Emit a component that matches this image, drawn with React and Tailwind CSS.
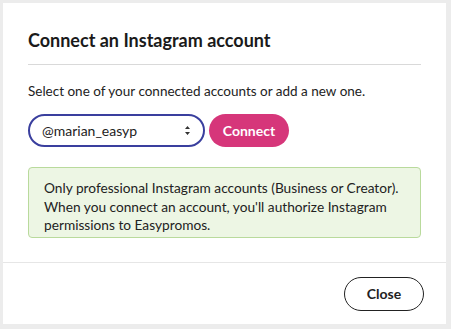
export default function App() {
  return (
    <div className="w-[451px] h-[329px] bg-[#ececec] pt-[3px] pl-[3px] pr-[5px] pb-[5px]" style={{ fontFamily: 'Lato, "Noto Sans", sans-serif' }}>
      <div className="bg-white h-full flex flex-col">
        <div className="px-[25px]">
          <div className="pt-[26px] pb-[13px] border-b border-[#d9d9d9]">
            <h3 className="text-[18px] leading-[22px] font-bold text-[#1a1a1a]">Connect an Instagram account</h3>
          </div>
          <p className="mt-[16px] text-[13.5px] leading-[20px] text-[#222]">Select one of your connected accounts or add a new one.</p>
          <div className="flex items-center gap-[4px] mt-[13px]">
            <div className="w-[177px] h-[33px] rounded-full border-2 border-[#3a3f9e] flex items-center justify-between pl-[12px] pr-[12px]">
              <span className="text-[14px] text-[#222]">@marian_easyp</span>
              <svg width="7" height="11" viewBox="0 0 7 11"><path d="M3.5 1 L6 4 H1 Z M3.5 10 L6 7 H1 Z" fill="#333" /></svg>
            </div>
            <button className="w-[80px] h-[33px] rounded-full bg-[#d6367a] text-white text-[14px] font-bold">Connect</button>
          </div>
          <div className="mt-[20px] border border-[#b9da9c] bg-[#edf6e4] rounded-[4px] px-[15px] pt-[11px] pb-[3px] text-[13.7px] leading-[18px] text-[#222]">
            <p>Only professional Instagram accounts (Business or Creator).</p>
            <p className="mt-[1px]">When you connect an account, you'll authorize Instagram permissions to Easypromos.</p>
          </div>
        </div>
        <div className="mt-auto border-t border-[#e6e6e6] h-[62px] flex items-center justify-end px-[22px]">
          <button className="w-[80px] h-[34px] rounded-full border border-[#222] text-[14px] font-bold text-[#222] bg-white">Close</button>
        </div>
      </div>
    </div>
  )
}
